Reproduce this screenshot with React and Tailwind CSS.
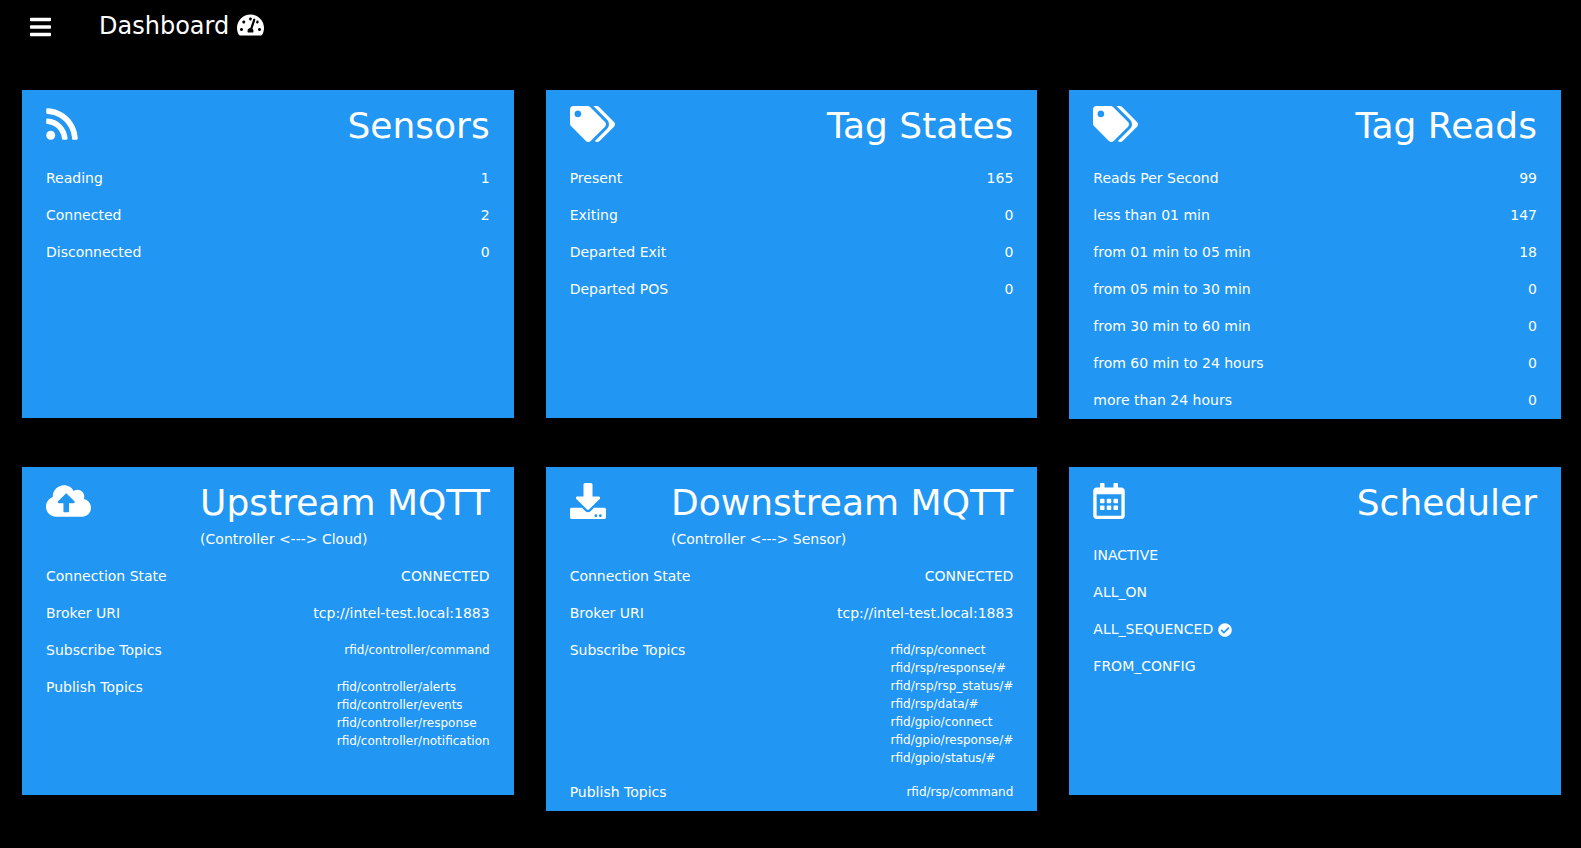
import {
  FaBars,
  FaTachometerAlt,
  FaRss,
  FaTags,
  FaCloudUploadAlt,
  FaDownload,
  FaRegCalendarAlt,
  FaCheckCircle,
} from "react-icons/fa";

function Card({ icon: Icon, iconWidth, title, subtitle, children }) {
  return (
    <section className="min-h-[328px] bg-[#2196f3]">
      <header className="flex items-start justify-between px-6 py-2">
        <Icon aria-hidden="true" className={`mt-2 h-9 shrink-0 ${iconWidth}`} />
        <div>
          <h2 className="pt-[2px] text-[36px] leading-[52px]">{title}</h2>
          {subtitle && <p>{subtitle}</p>}
        </div>
      </header>
      {children}
    </section>
  );
}

function Rows({ items }) {
  return (
    <dl>
      {items.map(([label, value]) => (
        <div key={label} className="flex justify-between gap-4 px-6 py-2">
          <dt>{label}</dt>
          <dd>
            {Array.isArray(value) ? (
              <ul className="mt-px -mb-px text-[12px] leading-[18px]">
                {value.map((topic) => (
                  <li key={topic}>{topic}</li>
                ))}
              </ul>
            ) : (
              value
            )}
          </dd>
        </div>
      ))}
    </dl>
  );
}

const sensors = [
  ["Reading", 1],
  ["Connected", 2],
  ["Disconnected", 0],
];

const tagStates = [
  ["Present", 165],
  ["Exiting", 0],
  ["Departed Exit", 0],
  ["Departed POS", 0],
];

const tagReads = [
  ["Reads Per Second", 99],
  ["less than 01 min", 147],
  ["from 01 min to 05 min", 18],
  ["from 05 min to 30 min", 0],
  ["from 30 min to 60 min", 0],
  ["from 60 min to 24 hours", 0],
  ["more than 24 hours", 0],
];

const upstream = [
  ["Connection State", "CONNECTED"],
  ["Broker URI", "tcp://intel-test.local:1883"],
  ["Subscribe Topics", ["rfid/controller/command"]],
  [
    "Publish Topics",
    [
      "rfid/controller/alerts",
      "rfid/controller/events",
      "rfid/controller/response",
      "rfid/controller/notification",
    ],
  ],
];

const downstream = [
  ["Connection State", "CONNECTED"],
  ["Broker URI", "tcp://intel-test.local:1883"],
  [
    "Subscribe Topics",
    [
      "rfid/rsp/connect",
      "rfid/rsp/response/#",
      "rfid/rsp/rsp_status/#",
      "rfid/rsp/data/#",
      "rfid/gpio/connect",
      "rfid/gpio/response/#",
      "rfid/gpio/status/#",
    ],
  ],
  ["Publish Topics", ["rfid/rsp/command"]],
];

const modes = ["INACTIVE", "ALL_ON", "ALL_SEQUENCED", "FROM_CONFIG"];
const activeMode = "ALL_SEQUENCED";

export default function App() {
  return (
    <div className="min-h-screen bg-black font-['DejaVu_Sans',sans-serif] text-[14px] leading-[21px] text-white">
      <header className="flex items-center gap-12 px-[30px] pt-2">
        <button type="button" aria-label="Open menu" className="pt-[2px]">
          <FaBars aria-hidden="true" className="h-6 w-[21px]" />
        </button>
        <h1 className="text-[24px] leading-9">
          Dashboard{" "}
          <FaTachometerAlt aria-hidden="true" className="inline h-6 w-[27px] align-[-3px]" />
        </h1>
      </header>

      <main className="grid grid-cols-3 items-start gap-x-8 gap-y-12 pt-[46px] pr-5 pb-8 pl-[22px]">
        <Card icon={FaRss} iconWidth="w-8" title="Sensors">
          <Rows items={sensors} />
        </Card>
        <Card icon={FaTags} iconWidth="w-[45px]" title="Tag States">
          <Rows items={tagStates} />
        </Card>
        <Card icon={FaTags} iconWidth="w-[45px]" title="Tag Reads">
          <Rows items={tagReads} />
        </Card>
        <Card
          icon={FaCloudUploadAlt}
          iconWidth="w-[45px]"
          title="Upstream MQTT"
          subtitle="(Controller <---> Cloud)"
        >
          <Rows items={upstream} />
        </Card>
        <Card
          icon={FaDownload}
          iconWidth="w-9"
          title="Downstream MQTT"
          subtitle="(Controller <---> Sensor)"
        >
          <Rows items={downstream} />
        </Card>
        <Card icon={FaRegCalendarAlt} iconWidth="w-8" title="Scheduler">
          <ul>
            {modes.map((mode) => (
              <li key={mode} className="flex items-center gap-[5px] px-6 py-2">
                {mode}
                {mode === activeMode && <FaCheckCircle aria-label="active" className="size-[14px]" />}
              </li>
            ))}
          </ul>
        </Card>
      </main>
    </div>
  );
}
